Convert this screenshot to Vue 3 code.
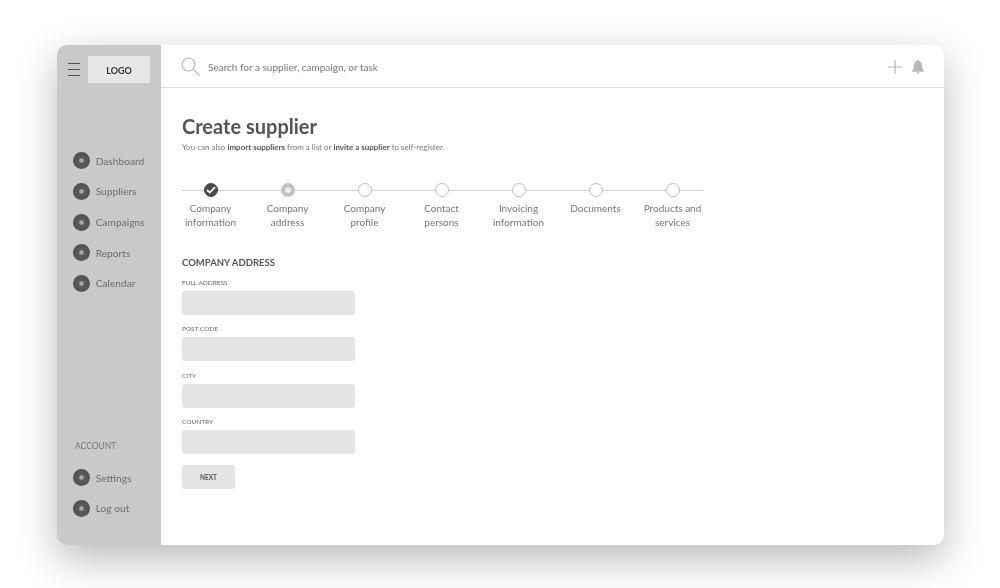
<template>
  <div class="page">
    <div class="window">
      <aside class="sidebar">
        <div class="brand">
          <button class="burger" aria-label="Menu"><span></span><span></span><span></span></button>
          <div class="logo">LOGO</div>
        </div>

        <nav class="nav">
          <a v-for="item in mainNav" :key="item" class="nav-item">
            <span class="dot"></span>{{ item }}
          </a>
        </nav>

        <div class="account">
          <div class="account-title">ACCOUNT</div>
          <a v-for="item in accountNav" :key="item" class="nav-item">
            <span class="dot"></span>{{ item }}
          </a>
        </div>
      </aside>

      <div class="main">
        <header class="topbar">
          <svg class="search-icon" width="20" height="20" viewBox="0 0 20 20" fill="none" stroke="#b5b5b5" stroke-width="1.2">
            <circle cx="7.5" cy="7.5" r="6.5" />
            <path d="M12.2 12.2 L18.6 18.6" />
          </svg>
          <span class="search-text">Search for a supplier, campaign, or task</span>
          <svg class="plus-icon" width="14" height="14" viewBox="0 0 14 14" stroke="#b5b5b5" stroke-width="1.2">
            <path d="M7 0V14M0 7H14" />
          </svg>
          <svg class="bell-icon" width="12" height="14" viewBox="0 0 12 14" fill="#b8b8b8">
            <path d="M6 0C5.3 0 4.9.5 4.9 1.1 3 1.6 2.1 3.2 2.1 5.2c0 2.6-.6 4.300-2 5.600V11.700h11.800V10.800c-1.400-1.300-2-3-2-5.600 0-2-.9-3.600-2.800-4.100C7.100.5 6.700 0 6 0Z" />
            <path d="M4.500 12.300a1.500 1.500 0 0 0 3 0Z" />
          </svg>
        </header>

        <main class="content">
          <h1>Create supplier</h1>
          <p class="intro">
            You can also <strong>import suppliers</strong> from a list or
            <strong>invite a supplier</strong> to self-register.
          </p>

          <ol class="stepper">
            <li v-for="(step, i) in steps" :key="step" class="step">
              <span class="marker" :class="i === 0 ? 'done' : i === 1 ? 'current' : ''">
                <svg v-if="i === 0" width="10" height="8" viewBox="0 0 10 8" fill="none" stroke="#fff" stroke-width="1.8">
                  <path d="M1 4 L3.800 6.600 L9 1.200" />
                </svg>
              </span>
              <span class="step-label">{{ step }}</span>
            </li>
          </ol>

          <h2>COMPANY ADDRESS</h2>
          <form class="form" @submit.prevent>
            <div v-for="field in fields" :key="field" class="field">
              <label>{{ field }}</label>
              <input type="text" />
            </div>
            <button type="submit" class="next">NEXT</button>
          </form>
        </main>
      </div>
    </div>
  </div>
</template>

<script setup>
const mainNav = ['Dashboard', 'Suppliers', 'Campaigns', 'Reports', 'Calendar']
const accountNav = ['Settings', 'Log out']
const steps = [
  'Company information',
  'Company address',
  'Company profile',
  'Contact persons',
  'Invoicing information',
  'Documents',
  'Products and services'
]
const fields = ['FULL ADDRESS', 'POST CODE', 'CITY', 'COUNTRY']
</script>

<style>
body {
  background: #fff;
  overflow: hidden;
}
</style>

<style scoped>
.page {
  box-sizing: border-box;
  width: 1000px;
  height: 588px;
  padding: 45px 56px 43px 57px;
  font-family: Lato, "Noto Sans", sans-serif;
  color: #6f6f6f;
}

.window {
  display: flex;
  height: 500px;
  border-radius: 10px;
  background: #fff;
  box-shadow: 0 14px 42px rgba(0, 0, 0, 0.28);
  overflow: hidden;
  filter: grayscale(1) blur(0.4px);
}

.sidebar {
  display: flex;
  flex-direction: column;
  flex: 0 0 104px;
  background: #c9c9c9;
}

.brand {
  display: flex;
  align-items: center;
  gap: 8px;
  padding: 11px 11px 0 11px;
}

.burger {
  display: flex;
  flex-direction: column;
  gap: 5px;
  width: 12px;
  padding: 0;
  border: none;
  background: none;
  margin-bottom: 1px;
}

.burger span {
  height: 1px;
  background: #4f4f4f;
}

.logo {
  width: 62px;
  height: 27px;
  line-height: 29px;
  text-align: center;
  background: #e6e6e6;
  color: #333;
  font-size: 9px;
  font-weight: 700;
}

.nav {
  padding-top: 62.600px;
}

.nav-item {
  display: flex;
  align-items: center;
  gap: 6px;
  height: 30.600px;
  padding-left: 15.700px;
  font-size: 10.200px;
  color: #6d6d6d;
}

.dot {
  width: 17px;
  height: 17px;
  border-radius: 50%;
  background: radial-gradient(circle, #a8a8a8 0 1.500px, #5a5a5a 3px, #4e4e4e 100%);
}

.account {
  margin-top: auto;
  padding-bottom: 21.500px;
}

.account-title {
  padding: 0 0 11.500px 18px;
  font-size: 8.500px;
  color: #777;
}

.main {
  flex: 1;
  display: flex;
  flex-direction: column;
  min-width: 0;
}

.topbar {
  display: flex;
  align-items: center;
  flex: 0 0 43px;
  box-sizing: border-box;
  padding: 1px 20px 0 20px;
  border-bottom: 1px solid #dcdcdc;
}

.search-icon {
  margin-right: 7px;
}

.search-text {
  flex: 1;
  font-size: 10px;
  color: #777;
}

.plus-icon {
  margin-right: 10px;
}

.content {
  padding: 26px 0 0 21px;
}

h1 {
  margin: 0;
  font-size: 20px;
  line-height: 24px;
  font-weight: 700;
  color: #555;
}

.intro {
  margin: 3px 0 0;
  font-size: 8px;
  line-height: 12px;
  color: #777;
}

.intro strong {
  color: #555;
}

.stepper {
  position: relative;
  display: grid;
  grid-template-columns: repeat(7, 77px);
  width: 539px;
  margin: 30px 0 0 -10px;
  padding: 0;
  list-style: none;
}

.stepper::before {
  content: "";
  position: absolute;
  top: 7px;
  left: 10px;
  width: 521px;
  height: 1px;
  background: #d4d4d4;
}

.step {
  position: relative;
  display: flex;
  flex-direction: column;
  align-items: center;
  text-align: center;
}

.marker {
  display: flex;
  align-items: center;
  justify-content: center;
  box-sizing: border-box;
  width: 14px;
  height: 14px;
  border: 1px solid #bdbdbd;
  border-radius: 50%;
  background: #fff;
}

.marker.done {
  border-color: #4a4a4a;
  background: #4a4a4a;
}

.marker.current {
  border: 4px solid #c4c4c4;
  background: #eee;
}

.step-label {
  width: 66px;
  margin-top: 5px;
  font-size: 10px;
  line-height: 13.500px;
  color: #777;
}

h2 {
  margin: 27px 0 0;
  font-size: 9.500px;
  line-height: 13px;
  font-weight: 700;
  color: #555;
}

.form {
  display: flex;
  flex-direction: column;
  align-items: flex-start;
}

.field {
  margin-top: 10px;
}

.field + .field {
  margin-top: 10.400px;
}

.field label {
  display: block;
  margin-bottom: 4px;
  font-size: 6.500px;
  line-height: 8px;
  color: #666;
}

.field input {
  display: block;
  box-sizing: border-box;
  width: 173px;
  height: 24px;
  border: none;
  border-radius: 3px;
  background: #e4e4e4;
}

.next {
  width: 53px;
  height: 24px;
  margin-top: 11px;
  padding: 0;
  border: none;
  border-radius: 3px;
  background: #e4e4e4;
  font-family: inherit;
  font-size: 6.500px;
  font-weight: 700;
  color: #555;
}
</style>
